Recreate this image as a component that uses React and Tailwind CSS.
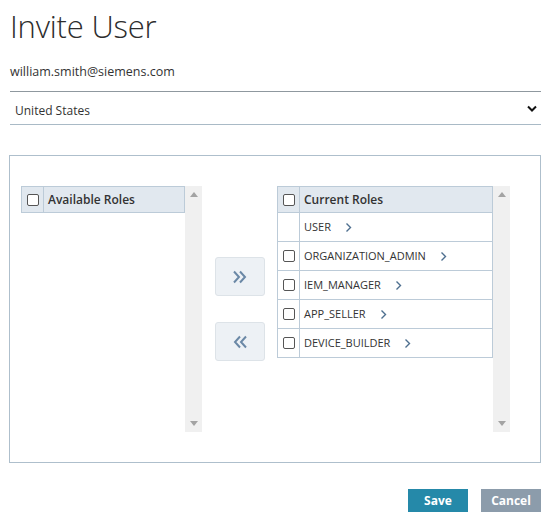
import React from "react";

const Chevron = () => (
  <svg width="7" height="11" viewBox="0 0 7 11" className="ml-[14px]">
    <polyline points="1.5,1.5 5.5,5.5 1.5,9.5" fill="none" stroke="#4e6f8f" strokeWidth="1.4" />
  </svg>
);

const Box = () => (
  <span className="block w-[12px] h-[12px] border border-[#555] rounded-[2px] bg-white" />
);

const ScrollBar = () => (
  <div className="w-[17px] bg-[#f0f0f0] flex flex-col items-center justify-between py-[6px]">
    <svg width="8" height="5" viewBox="0 0 8 5"><polygon points="4,0 8,5 0,5" fill="#a3a3a3" /></svg>
    <svg width="8" height="5" viewBox="0 0 8 5"><polygon points="0,0 8,0 4,5" fill="#a3a3a3" /></svg>
  </div>
);

const roles = [
  { name: "USER", check: false },
  { name: "ORGANIZATION_ADMIN", check: true },
  { name: "IEM_MANAGER", check: true },
  { name: "APP_SELLER", check: true },
  { name: "DEVICE_BUILDER", check: true },
];

export default function App() {
  return (
    <div className="w-[554px] h-[527px] bg-white text-[#333] pl-[10px] pt-[4px]" style={{ fontFamily: '"Open Sans", "Noto Sans", sans-serif' }}>
      <div className="w-[531px]">
        <h1 className="text-[31px] font-light leading-[44px] tracking-[-0.2px] text-[#2d2d2d]">Invite User</h1>
        <div className="text-[12.5px] h-[44px] pt-[16px] leading-[16px] border-b border-[#8f989f]">william.smith@siemens.com</div>
        <div className="h-[33px] flex items-center justify-between pl-[5px] pr-[4px] pt-[5px] border-b border-[#a9bac6] text-[12px]">
          <span>United States</span>
          <svg width="10" height="7" viewBox="0 0 10 7" className="-mt-[4px]"><polyline points="1,1.5 5,5.5 9,1.5" fill="none" stroke="#111" strokeWidth="2" /></svg>
        </div>
        <div className="mt-[30px] -ml-[1px] w-[532px] h-[308px] border border-[#aebfcc] pt-[30px] pl-[11px] flex items-start">
          <div className="flex h-[246px]">
            <div className="w-[164px]">
              <div className="h-[27px] flex bg-[#e1e8ef] border border-[#bccbd8]">
                <div className="w-[22px] flex items-center justify-center border-r border-[#bccbd8]"><Box /></div>
                <div className="pl-[4px] flex items-center text-[12px] font-semibold">Available Roles</div>
              </div>
            </div>
            <ScrollBar />
          </div>
          <div className="ml-[13px] h-[246px] flex flex-col justify-center gap-[26px]">
            <button className="w-[50px] h-[39px] rounded-[3px] bg-[#edf1f5] border border-[#dde3e8] flex items-center justify-center">
              <svg width="16" height="14" viewBox="0 0 16 14"><polyline points="2,1.5 7,7 2,12.5" fill="none" stroke="#6b88a6" strokeWidth="2" /><polyline points="8,1.5 13,7 8,12.5" fill="none" stroke="#6b88a6" strokeWidth="2" /></svg>
            </button>
            <button className="w-[50px] h-[39px] rounded-[3px] bg-[#edf1f5] border border-[#dde3e8] flex items-center justify-center">
              <svg width="16" height="14" viewBox="0 0 16 14"><polyline points="14,1.5 9,7 14,12.5" fill="none" stroke="#6b88a6" strokeWidth="2" /><polyline points="8,1.5 3,7 8,12.5" fill="none" stroke="#6b88a6" strokeWidth="2" /></svg>
            </button>
          </div>
          <div className="ml-[12px] flex h-[246px]">
            <div className="w-[216px]">
              <div className="h-[27px] flex bg-[#e1e8ef] border border-[#bccbd8]">
                <div className="w-[22px] flex items-center justify-center border-r border-[#bccbd8]"><Box /></div>
                <div className="pl-[4px] flex items-center text-[12px] font-semibold">Current Roles</div>
              </div>
              {roles.map((r) => (
                <div key={r.name} className="h-[29px] flex border border-t-0 border-[#bccbd8]">
                  <div className="w-[22px] flex items-center justify-center border-r border-[#bccbd8]">{r.check && <Box />}</div>
                  <div className="pl-[4px] flex items-center text-[11px]">{r.name}<Chevron /></div>
                </div>
              ))}
            </div>
            <ScrollBar />
          </div>
        </div>
        <div className="mt-[26px] flex justify-end gap-[13px]">
          <button className="w-[60px] h-[23px] bg-[#2589a9] text-white text-[12px] font-bold">Save</button>
          <button className="w-[60px] h-[23px] bg-[#8c9cab] text-white text-[12px] font-bold">Cancel</button>
        </div>
      </div>
    </div>
  );
}
